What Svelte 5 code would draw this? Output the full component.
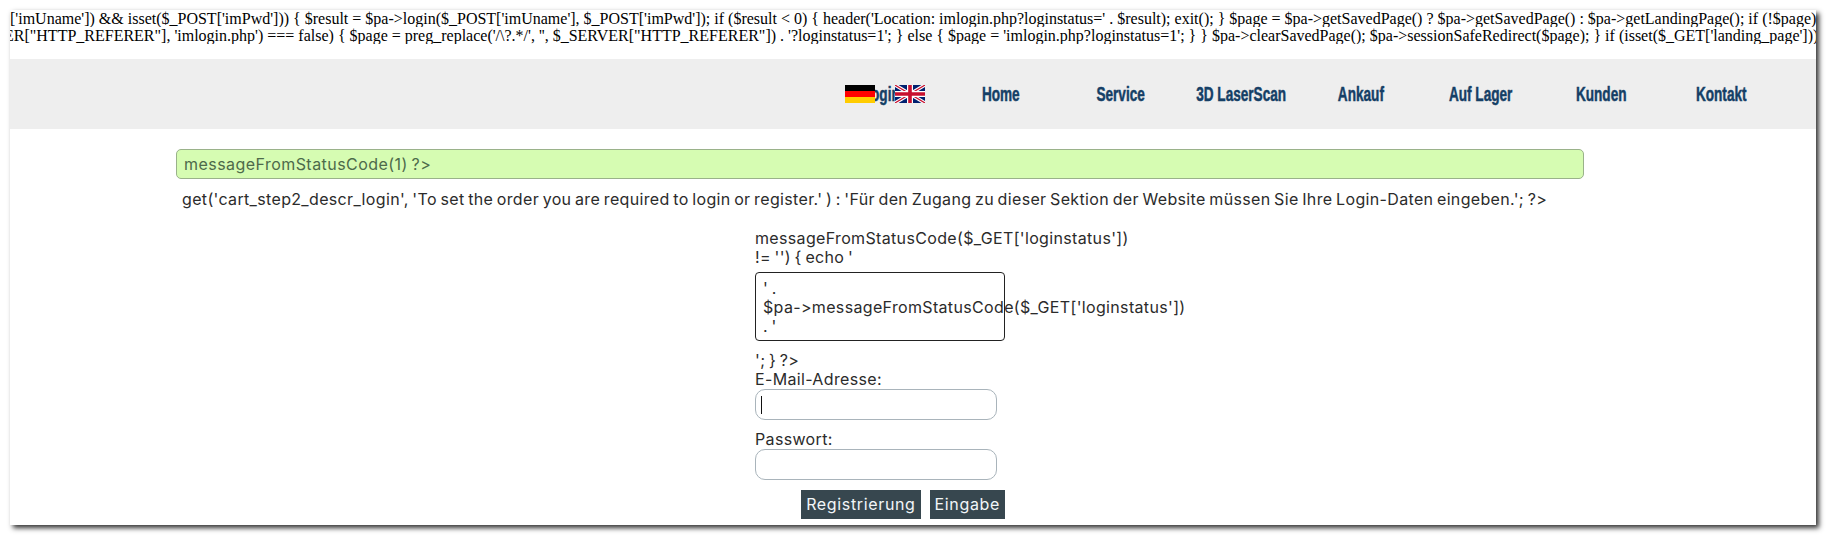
<script lang="ts">
	const sourceLines = [
		`['imUname']) && isset($_POST['imPwd'])) { $result = $pa->login($_POST['imUname'], $_POST['imPwd']); if ($result < 0) { header('Location: imlogin.php?loginstatus=' . $result); exit(); } $page = $pa->getSavedPage() ? $pa->getSavedPage() : $pa->getLandingPage(); if (!$page)`,
		`ER["HTTP_REFERER"], 'imlogin.php') === false) { $page = preg_replace('/\\?.*/', '', $_SERVER["HTTP_REFERER"]) . '?loginstatus=1'; } else { $page = 'imlogin.php?loginstatus=1'; } } $pa->clearSavedPage(); $pa->sessionSafeRedirect($page); } if (isset($_GET['landing_page']))`
	];

	const navItems = ['Login', 'Home', 'Service', '3D LaserScan', 'Ankauf', 'Auf Lager', 'Kunden', 'Kontakt'];

	const intro = `get('cart_step2_descr_login', 'To set the order you are required to login or register.' ) : 'Für den Zugang zu dieser Sektion der Website müssen Sie Ihre Login-Daten eingeben.'; ?>`;
	const statusLine = `messageFromStatusCode($_GET['loginstatus'])`;
	const echoLine = `!= '') { echo '`;
	const closeLine = `'; } ?>`;
</script>

<div class="window">
	<div class="source">
		{#each sourceLines as line}
			<div class="source-line">{line}</div>
		{/each}
	</div>

	<nav class="nav">
		<div class="flags">
			<svg width="30" height="18" viewBox="0 0 30 18">
				<rect width="30" height="6" fill="#000" />
				<rect y="6" width="30" height="6" fill="#f00" />
				<rect y="12" width="30" height="6" fill="#fc0" />
			</svg>
			<svg width="30" height="18" viewBox="0 0 30 18">
				<rect width="30" height="18" fill="#00206f" />
				<path d="M0 0 30 18M30 0 0 18" stroke="#fff" stroke-width="3.6" />
				<path d="M0 0 30 18M30 0 0 18" stroke="#c8102e" stroke-width="1.2" />
				<path d="M15 0V18M0 9H30" stroke="#fff" stroke-width="6" />
				<path d="M15 0V18M0 9H30" stroke="#c8102e" stroke-width="3.6" />
			</svg>
		</div>
		{#each navItems as item}
			<a class="nav-item" href="#top"><span>{item}</span></a>
		{/each}
	</nav>

	<main class="content">
		<div class="alert">messageFromStatusCode(1) ?&gt;</div>
		<p class="intro">{intro}</p>

		<form class="login" onsubmit={(event) => event.preventDefault()}>
			<div class="status">{statusLine}<br />{echoLine}</div>
			<div class="status-box">
				<div>' .</div>
				<div class="nowrap">$pa-&gt;messageFromStatusCode($_GET['loginstatus'])</div>
				<div>. '</div>
			</div>
			<div class="line">{closeLine}</div>

			<label class="line" for="email">E-Mail-Adresse:</label>
			<div class="field">
				<input id="email" type="text" />
				<span class="caret"></span>
			</div>

			<label class="line" for="password">Passwort:</label>
			<div class="field">
				<input id="password" type="password" />
			</div>

			<div class="actions">
				<button type="button">Registrierung</button>
				<button type="submit">Eingabe</button>
			</div>
		</form>
	</main>
</div>

<style>
	:global(body) {
		min-height: 536px;
		background: #fff;
		font-family: 'Inter', 'Open Sans', sans-serif;
	}

	.window {
		margin: 10px 0 0 10px;
		width: 1806px;
		height: 515px;
		background: #fff;
		box-shadow: 3px 3px 5px #333;
	}

	.source {
		height: 49px;
		overflow: hidden;
		font-family: 'Liberation Serif', serif;
		font-size: 16px;
		line-height: 17px;
		color: #000;
	}

	.source-line {
		white-space: nowrap;
		overflow: hidden;
	}

	.source-line:last-child {
		text-indent: -6px;
	}

	.nav {
		position: relative;
		display: flex;
		height: 70px;
		padding-left: 811px;
		box-sizing: border-box;
		align-items: center;
		background: #eee;
	}

	.flags {
		position: absolute;
		z-index: 1;
		left: 835px;
		top: 26px;
		display: flex;
		gap: 20px;
	}

	.flags svg {
		display: block;
	}

	.nav-item {
		display: flex;
		justify-content: center;
		width: 120px;
		flex: none;
		text-decoration: none;
		color: #153f66;
		font-family: 'Liberation Sans', sans-serif;
		font-weight: 700;
		font-size: 20px;
	}

	.nav-item span {
		flex: none;
		white-space: nowrap;
		-webkit-text-stroke: 0.5px #153f66;
		transform: scaleX(0.68);
	}

	.content {
		width: 1408px;
		margin-left: 166px;
		color: #2b2b2b;
		font-size: 16px;
		letter-spacing: 0.34px;
		word-spacing: -1.2px;
	}

	.alert {
		box-sizing: border-box;
		height: 30px;
		margin-top: 20px;
		padding: 0 7px;
		line-height: 28px;
		background: #d6fcb2;
		border: 1px solid #9ab28a;
		border-radius: 5px;
		color: #4d6a4a;
		letter-spacing: 0.45px;
	}

	.intro {
		margin: 0;
		padding: 11px 0 0 6px;
		line-height: 19px;
		white-space: nowrap;
	}

	.login {
		width: 250px;
		margin: 20px 0 0 579px;
		line-height: 19px;
	}

	.status-box {
		box-sizing: border-box;
		width: 250px;
		height: 69px;
		margin: 5px 0 10px;
		padding: 6px 7px;
		border: 1px solid #222;
		border-radius: 4px;
		line-height: 19px;
	}

	.nowrap {
		white-space: nowrap;
	}

	.line {
		display: block;
	}

	.field {
		position: relative;
		width: 242px;
		height: 31px;
		margin-bottom: 10px;
	}

	.field input {
		display: block;
		box-sizing: border-box;
		width: 100%;
		height: 100%;
		padding: 0 6px;
		border: 1px solid #a9b4bb;
		border-radius: 10px;
		background: #fff;
		outline: none;
	}

	.caret {
		position: absolute;
		left: 6px;
		top: 7px;
		width: 1px;
		height: 18px;
		background: #111;
	}

	.actions {
		display: flex;
		justify-content: flex-end;
		gap: 9px;
	}

	.actions button {
		height: 29px;
		padding: 0 5px;
		border: none;
		background: #37474f;
		color: #f2f6f8;
		font: inherit;
		letter-spacing: 0.65px;
		word-spacing: inherit;
	}
</style>
